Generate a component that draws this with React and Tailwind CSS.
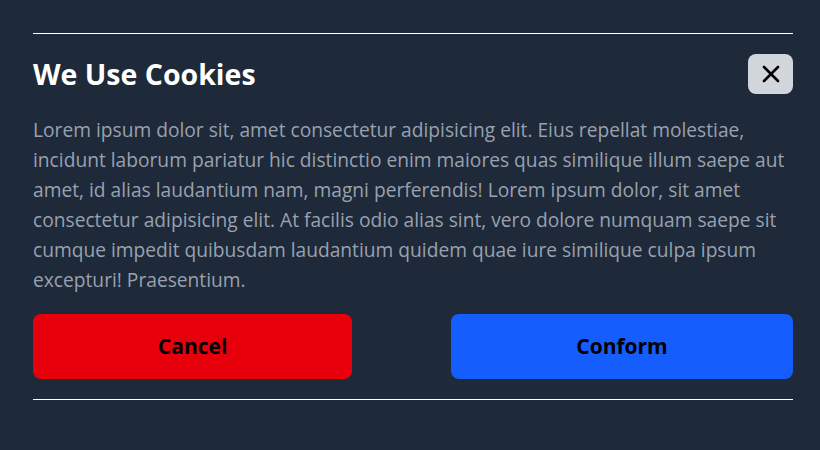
import React from 'react';
import { X } from 'lucide-react';

const App = () => {
  return (
    <div className="min-h-[450px] w-full bg-[#1e2939] pl-[33px] pr-[27px] pt-[33px] font-['Open_Sans',sans-serif]">
      <div className="border-y border-white py-5">
        <div className="flex items-center justify-between">
          <h2 className="text-[28.5px] font-bold leading-10 text-white">We Use Cookies</h2>
          <button className="flex h-10 w-[45px] items-center justify-center rounded-lg bg-[#d1d5dc] text-black">
            <X className="h-7 w-7" strokeWidth={2.25} />
          </button>
        </div>
        <p className="mt-[21px] text-[19.2px] leading-[30px] text-[#99a1af]">
          Lorem ipsum dolor sit, amet consectetur adipisicing elit. Eius repellat molestiae, incidunt laborum pariatur hic
          distinctio enim maiores quas similique illum saepe aut amet, id alias laudantium nam, magni perferendis! Lorem
          ipsum dolor, sit amet consectetur adipisicing elit. At facilis odio alias sint, vero dolore numquam saepe sit
          cumque impedit quibusdam laudantium quidem quae iure similique culpa ipsum excepturi! Praesentium.
        </p>
        <div className="mt-[19px] flex justify-between">
          <button className="h-[65px] w-[42%] rounded-lg bg-[#e7000b] text-[21px] font-bold text-black">Cancel</button>
          <button className="h-[65px] w-[45%] rounded-lg bg-[#155dfc] text-[21px] font-bold text-black">Conform</button>
        </div>
      </div>
    </div>
  );
};

export default App;
